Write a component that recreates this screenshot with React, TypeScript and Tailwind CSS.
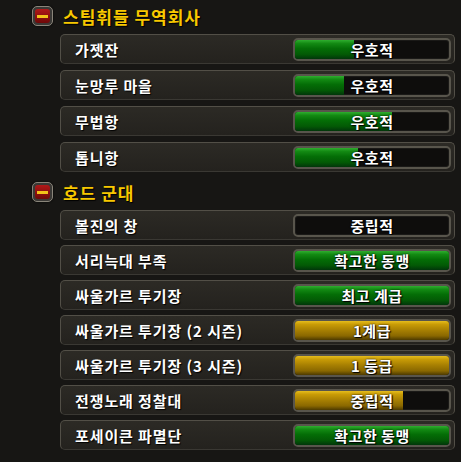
type Standing = "green" | "gold" | "none";

type RepRow = {
  name: string;
  label: string;
  kind: Standing;
  fill: number;
};

type Section = {
  title: string;
  gap: string;
  rows: RepRow[];
};

const sections: Section[] = [
  {
    title: "스팀휘들 무역회사",
    gap: "gap-[6px]",
    rows: [
      { name: "가젯잔", label: "우호적", kind: "green", fill: 38 },
      { name: "눈망루 마을", label: "우호적", kind: "green", fill: 32 },
      { name: "무법항", label: "우호적", kind: "green", fill: 63 },
      { name: "톱니항", label: "우호적", kind: "green", fill: 41 },
    ],
  },
  {
    title: "호드 군대",
    gap: "gap-[5px]",
    rows: [
      { name: "볼진의 창", label: "중립적", kind: "none", fill: 0 },
      { name: "서리늑대 부족", label: "확고한 동맹", kind: "green", fill: 100 },
      { name: "싸울가르 투기장", label: "최고 계급", kind: "green", fill: 100 },
      { name: "싸울가르 투기장 (2 시즌)", label: "1계급", kind: "gold", fill: 100 },
      { name: "싸울가르 투기장 (3 시즌)", label: "1 등급", kind: "gold", fill: 100 },
      { name: "전쟁노래 정찰대", label: "중립적", kind: "gold", fill: 70 },
      { name: "포세이큰 파멸단", label: "확고한 동맹", kind: "green", fill: 100 },
    ],
  },
];

const fillClass: Record<Standing, string> = {
  green:
    "bg-[linear-gradient(180deg,#2fae2f_0%,#138a13_18%,#046d06_45%,#035a05_75%,#01360a_100%)]",
  gold: "bg-[linear-gradient(180deg,#e6bd1c_0%,#c89b06_18%,#a57e02_50%,#8a6800_78%,#4d3a00_100%)]",
  none: "",
};

function CollapseIcon() {
  return (
    <div className="w-[21px] h-[20px] rounded-[5px] bg-[#3a3835] border border-[#8a857a] p-[2px] shadow-[0_0_2px_#000]">
      <div className="w-full h-full rounded-[3px] bg-[linear-gradient(180deg,#b01818,#6e0808)] flex items-center justify-center">
        <div className="w-[11px] h-[3px] bg-[#f2c21a]" />
      </div>
    </div>
  );
}

function Bar({ row }: { row: RepRow }) {
  return (
    <div className="relative w-[158px] h-[23px] rounded-[5px] border-2 border-[#58554c] bg-[#0e0d0c] overflow-hidden shadow-[inset_0_0_0_1px_#1a1917]">
      {row.fill > 0 && (
        <div
          className={`absolute left-0 top-0 bottom-0 ${fillClass[row.kind]}`}
          style={{ width: `${row.fill}%` }}
        />
      )}
      <div className="relative h-full flex items-center justify-center text-white text-[15px] font-bold leading-none tracking-[0.5px] [text-shadow:1px_1px_1px_#000,0_0_2px_#000]">
        {row.label}
      </div>
    </div>
  );
}

function Row({ row }: { row: RepRow }) {
  return (
    <div className="ml-[60px] w-[395px] h-[30px] flex items-center justify-between pl-[14px] pr-[3px] rounded-[5px] border border-[#524f47] border-b-[#3a3833] bg-[linear-gradient(180deg,#2c2a25,#24221e)]">
      <div className="text-white text-[15px] font-bold leading-none tracking-[0.9px] [text-shadow:1px_1px_1px_#000]">
        {row.name}
      </div>
      <Bar row={row} />
    </div>
  );
}

export default function App() {
  return (
    <div
      className="w-[461px] h-[462px] overflow-hidden bg-[#171614] pt-[4px]"
      style={{ fontFamily: '"Noto Sans CJK KR", "Noto Sans", sans-serif' }}
    >
      {sections.map((section, i) => (
        <div key={section.title} className={i > 0 ? "mt-[8px]" : ""}>
          <div className="h-[24px] flex items-center gap-[10px] pl-[32px] mb-[6px]">
            <CollapseIcon />
            <div className="text-[#f8c800] text-[17px] font-bold leading-none tracking-[1px] [text-shadow:1px_1px_1px_#000]">
              {section.title}
            </div>
          </div>
          <div className={`flex flex-col ${section.gap}`}>
            {section.rows.map((row) => (
              <Row key={row.name} row={row} />
            ))}
          </div>
        </div>
      ))}
    </div>
  );
}
